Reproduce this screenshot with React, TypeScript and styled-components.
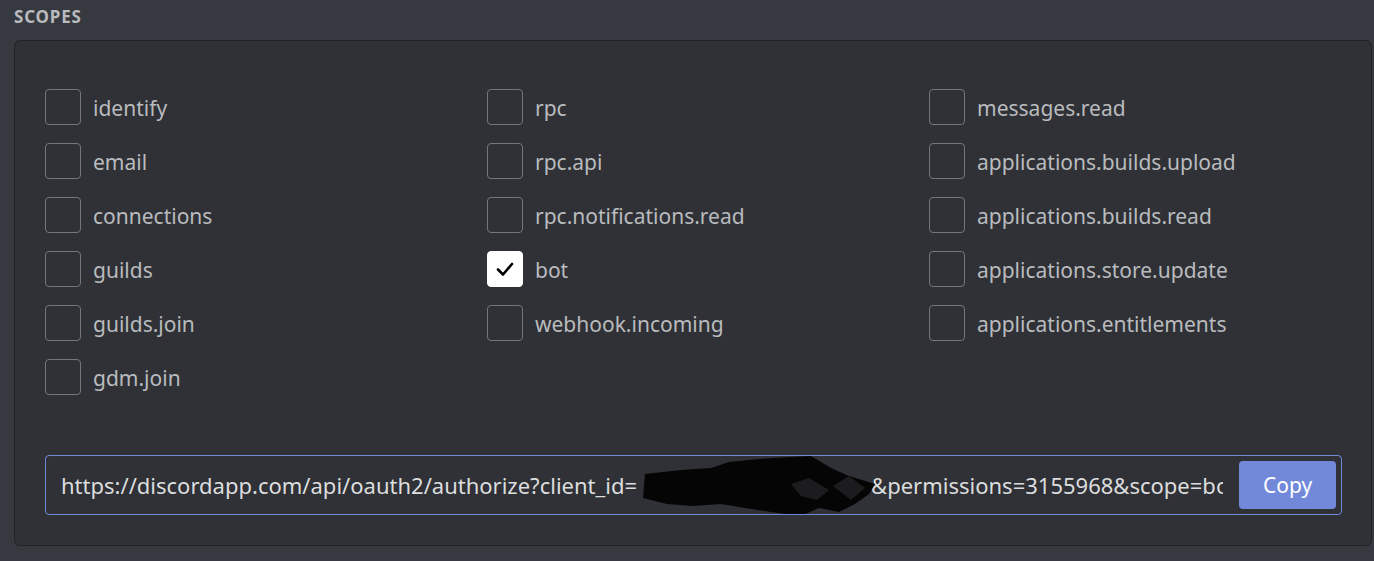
import styled, { createGlobalStyle } from 'styled-components';

const GlobalStyle = createGlobalStyle`
    html, body {
        margin: 0;
        background: #36393f;
        font-family: 'Noto Sans', 'Open Sans', 'Liberation Sans', sans-serif;
    }
`;

const Page = styled.div`
    padding: 7px 2px 15px 14px;
`;

const Heading = styled.h5`
    margin: 0 0 13px;
    font-size: 17px;
    line-height: 20px;
    font-weight: 700;
    letter-spacing: 0.8px;
    text-transform: uppercase;
    color: #b9bbbe;
`;

const Panel = styled.div`
    background: #2f3136;
    border: 1px solid #202225;
    border-radius: 6px;
    padding: 48px 29px 30px 30px;
`;

const Grid = styled.div`
    display: grid;
    grid-template-columns: repeat(3, 442px);
`;

const Column = styled.div`
    display: flex;
    flex-direction: column;
    gap: 18px;
`;

const Option = styled.label`
    display: flex;
    align-items: center;
    gap: 12px;
    height: 36px;
    font-size: 21px;
    color: #b9bbbe;
    cursor: pointer;
`;

const Label = styled.span`
    padding-top: 2px;
`;

const Box = styled.span<{ $checked?: boolean }>`
    box-sizing: border-box;
    width: 36px;
    height: 36px;
    flex: none;
    display: flex;
    align-items: center;
    justify-content: center;
    border-radius: 4px;
    border: 1px solid ${(p) => (p.$checked ? '#ffffff' : '#72767d')};
    background: ${(p) => (p.$checked ? '#ffffff' : 'transparent')};
`;

const UrlField = styled.div`
    box-sizing: border-box;
    margin-top: 60px;
    height: 60px;
    display: flex;
    align-items: center;
    gap: 16px;
    padding: 0 5px 0 15px;
    border: 1px solid #7289da;
    border-radius: 4px;
`;

const UrlText = styled.div`
    flex: 1;
    align-self: stretch;
    overflow: hidden;
    white-space: nowrap;
    font-size: 22px;
    line-height: 58px;
    color: #dcddde;
`;

const Redacted = styled.span`
    position: relative;
    display: inline-block;
    width: 234px;
    height: 1em;
    vertical-align: middle;
`;

const Scribble = styled.svg`
    position: absolute;
    left: 4px;
    top: -21px;
    overflow: visible;
`;

const CopyButton = styled.button`
    width: 97px;
    height: 48px;
    flex: none;
    border: none;
    border-radius: 4px;
    background: #7289da;
    color: #ffffff;
    font-family: inherit;
    font-size: 21px;
`;

const columns: { name: string; checked?: boolean }[][] = [
    [
        { name: 'identify' },
        { name: 'email' },
        { name: 'connections' },
        { name: 'guilds' },
        { name: 'guilds.join' },
        { name: 'gdm.join' }
    ],
    [
        { name: 'rpc' },
        { name: 'rpc.api' },
        { name: 'rpc.notifications.read' },
        { name: 'bot', checked: true },
        { name: 'webhook.incoming' }
    ],
    [
        { name: 'messages.read' },
        { name: 'applications.builds.upload' },
        { name: 'applications.builds.read' },
        { name: 'applications.store.update' },
        { name: 'applications.entitlements' }
    ]
];

const App = () => (
    <Page>
        <GlobalStyle />
        <Heading>Scopes</Heading>
        <Panel>
            <Grid>
                {columns.map((col, i) => (
                    <Column key={i}>
                        {col.map((scope) => (
                            <Option key={scope.name}>
                                <Box $checked={scope.checked}>
                                    {scope.checked && (
                                        <svg width="20" height="20" viewBox="0 0 20 20">
                                            <path
                                                d="M3 10.5 L8 15.5 L17 5"
                                                fill="none"
                                                stroke="#000"
                                                strokeWidth="2.6"
                                                strokeLinecap="round"
                                                strokeLinejoin="round"
                                            />
                                        </svg>
                                    )}
                                </Box>
                                <Label>{scope.name}</Label>
                            </Option>
                        ))}
                    </Column>
                ))}
            </Grid>
            <UrlField>
                <UrlText>
                    https://discordapp.com/api/oauth2/authorize?client_id=
                    <Redacted>
                        <Scribble width="234" height="60" viewBox="0 0 234 60">
                            <path
                                d="M4 18 L40 14 L70 12 L88 6 L118 3 L150 1 L170 0 L190 12 L208 20 L234 28 L228 38 L214 48 L198 56 L178 52 L160 60 L130 56 L104 52 L80 48 L52 50 L26 48 L2 42 Z"
                                fill="#050505"
                            />
                            <path
                                d="M150 28 L168 22 L188 34 L176 44 L160 40 Z M192 30 L208 20 L224 32 L210 44 Z"
                                fill="#1c1c1e"
                            />
                        </Scribble>
                    </Redacted>
                    &permissions=3155968&scope=bot
                </UrlText>
                <CopyButton>Copy</CopyButton>
            </UrlField>
        </Panel>
    </Page>
);

export default App;
